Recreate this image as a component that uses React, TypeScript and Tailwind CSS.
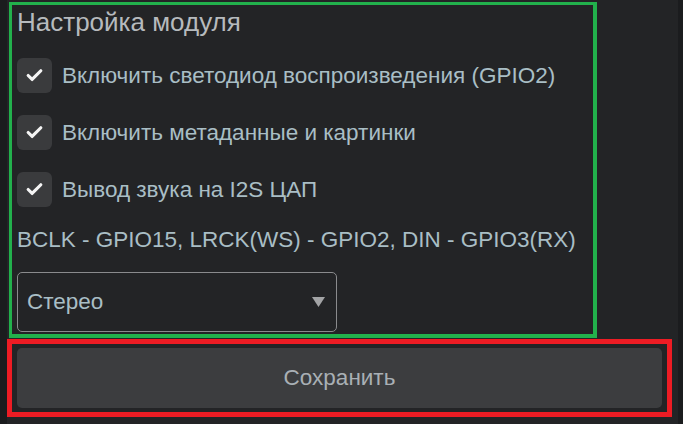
import { Check } from 'lucide-react';

const options = [
  'Включить светодиод воспроизведения (GPIO2)',
  'Включить метаданные и картинки',
  'Вывод звука на I2S ЦАП',
];

function CheckRow({ label }: { label: string }) {
  return (
    <label className="flex h-[57px] items-center gap-[10px]">
      <span className="flex h-[35px] w-[35px] items-center justify-center rounded-[6px] bg-[#3a3b3d]">
        <Check className="h-[19px] w-[19px] text-[#f4f4f4]" strokeWidth={4} />
      </span>
      <span className="text-[22.5px] text-[#a9bec5]">{label}</span>
    </label>
  );
}

export default function App() {
  return (
    <div
      className="flex h-[424px] w-[683px] bg-[#232426]"
      style={{ fontFamily: '"Liberation Sans", Arial, sans-serif' }}
    >
      <div className="w-[7px] shrink-0 bg-[#1b1c1e]" />

      <div className="flex w-[671px] flex-col">
        {/* Module settings */}
        <section className="ml-[2px] mt-[2px] h-[336px] w-[588px] border-b-[4px] border-l-[3px] border-r-[4px] border-t-[3px] border-[#22b14c] pl-[5px]">
          <h2 className="mt-[2px] text-[26px] leading-[30px] text-[#b6babd]">Настройка модуля</h2>
          <div className="mt-[10px] flex flex-col">
            {options.map((o) => (
              <CheckRow key={o} label={o} />
            ))}
          </div>
          <p className="mt-[8px] text-[22.5px] leading-[28px] text-[#a9bec5]">
            BCLK - GPIO15, LRCK(WS) - GPIO2, DIN - GPIO3(RX)
          </p>
          <div className="mt-[18px] flex h-[60px] w-[320px] items-center justify-between rounded-[5px] border border-[#8a8b8d] pl-[9px] pr-[11px]">
            <span className="text-[22.5px] text-[#a9bec5]">Стерео</span>
            <svg width="13" height="10" viewBox="0 0 13 10">
              <polygon points="0,0 13,0 6.5,10" fill="#a3a4a6" />
            </svg>
          </div>
        </section>

        {/* Save */}
        <div className="mt-px h-[78px] w-[665px] border-[5px] border-[#ed1c24] px-[5px] py-[4px]">
          <button className="h-[60px] w-full rounded-[5px] bg-[#3c3d3f] text-[22.5px] text-[#a9b0b5]">
            Сохранить
          </button>
        </div>
      </div>

      <div className="w-[5px] shrink-0 bg-[#1b1c1e]" />
    </div>
  );
}
